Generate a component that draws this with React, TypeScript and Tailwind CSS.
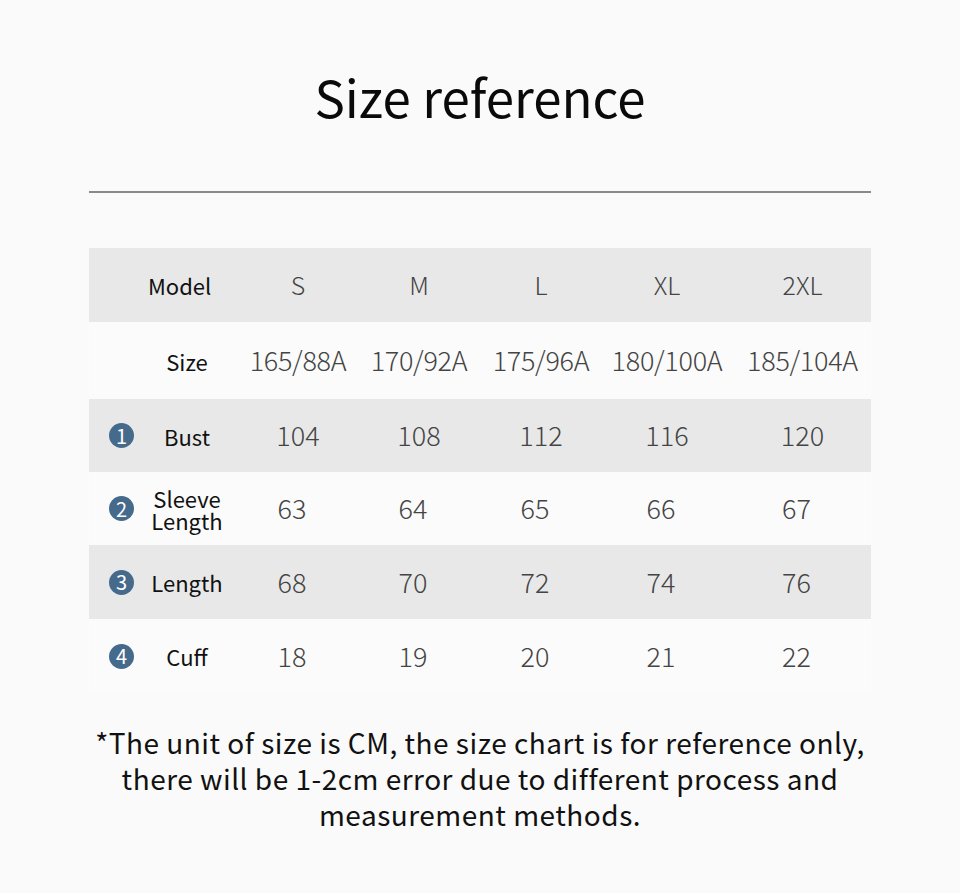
import React from "react";

const SIZES = ["S", "M", "L", "XL", "2XL"];
const CODES = ["165/88A", "170/92A", "175/96A", "180/100A", "185/104A"];

// the lower rows sit a few px left of the bust row in the original
const ROWS = [
  { n: 1, label: "Bust", values: [104, 108, 112, 116, 120], shade: true, h: "h-[73px]", shift: "" },
  { n: 2, label: "Sleeve\nLength", values: [63, 64, 65, 66, 67], shade: false, h: "h-[73px]", shift: "pr-[12px]" },
  { n: 3, label: "Length", values: [68, 70, 72, 74, 76], shade: true, h: "h-[74px]", shift: "pr-[12px]" },
  { n: 4, label: "Cuff", values: [18, 19, 20, 21, 22], shade: false, h: "h-[74px]", shift: "pr-[12px]" },
];

const grid = "grid grid-cols-[151px_116px_126px_118px_134px_137px] items-center";

function Badge({ n }: { n: number }) {
  return (
    <span className="flex h-[25px] w-[25px] items-center justify-center rounded-full bg-[#466a8c] text-[20px] leading-none text-white">
      {n}
    </span>
  );
}

function LabelCell({ n, label }: { n?: number; label: string }) {
  return (
    <div className="flex h-full items-center">
      <div className="flex w-[56px] justify-end pr-[11px]">{n ? <Badge n={n} /> : null}</div>
      <div className="w-[84px] whitespace-pre-line text-center text-[22px] leading-[22px] text-[#111]">{label}</div>
    </div>
  );
}

export default function App() {
  return (
    <div
      className="min-h-[893px] w-[960px] bg-[#fafafa] pt-[64px]"
      style={{ fontFamily: '"Noto Sans CJK SC", "Noto Sans", sans-serif' }}
    >
      <h1 className="text-center text-[51px] font-normal leading-[64px] text-[#0a0a0a]">Size reference</h1>

      <div className="mx-[89px] mt-[63px] h-[2px] bg-[#8a8a8a]" />

      <div className="mx-[89px] mt-[55px]">
        <div className={`${grid} h-[74px] bg-[#e8e8e8]`}>
          <div className="pl-[59px] text-[22px] text-[#111]">Model</div>
          {SIZES.map((s) => (
            <div key={s} className="text-center text-[25px] font-light text-[#444]">
              {s}
            </div>
          ))}
        </div>

        <div className={`${grid} h-[77px] bg-[#fbfbfb]`}>
          <LabelCell label="Size" />
          {CODES.map((c) => (
            <div key={c} className="text-center text-[27px] font-light tracking-[-0.3px] text-[#444]">
              {c}
            </div>
          ))}
        </div>

        {ROWS.map((r) => (
          <div key={r.n} className={`${grid} ${r.h} ${r.shade ? "bg-[#e8e8e8]" : "bg-[#fbfbfb]"}`}>
            <LabelCell n={r.n} label={r.label} />
            {r.values.map((v) => (
              <div key={v} className={`text-center text-[27px] font-light text-[#444] ${r.shift}`}>
                {v}
              </div>
            ))}
          </div>
        ))}
      </div>

      <p className="mx-auto mt-[31px] w-[820px] text-center text-[28px] leading-[36px] tracking-[0.5px] text-[#111]">
        *The unit of size is CM, the size chart is for reference only,
        <br />
        there will be 1-2cm error due to different process and
        <br />
        measurement methods.
      </p>
    </div>
  );
}
